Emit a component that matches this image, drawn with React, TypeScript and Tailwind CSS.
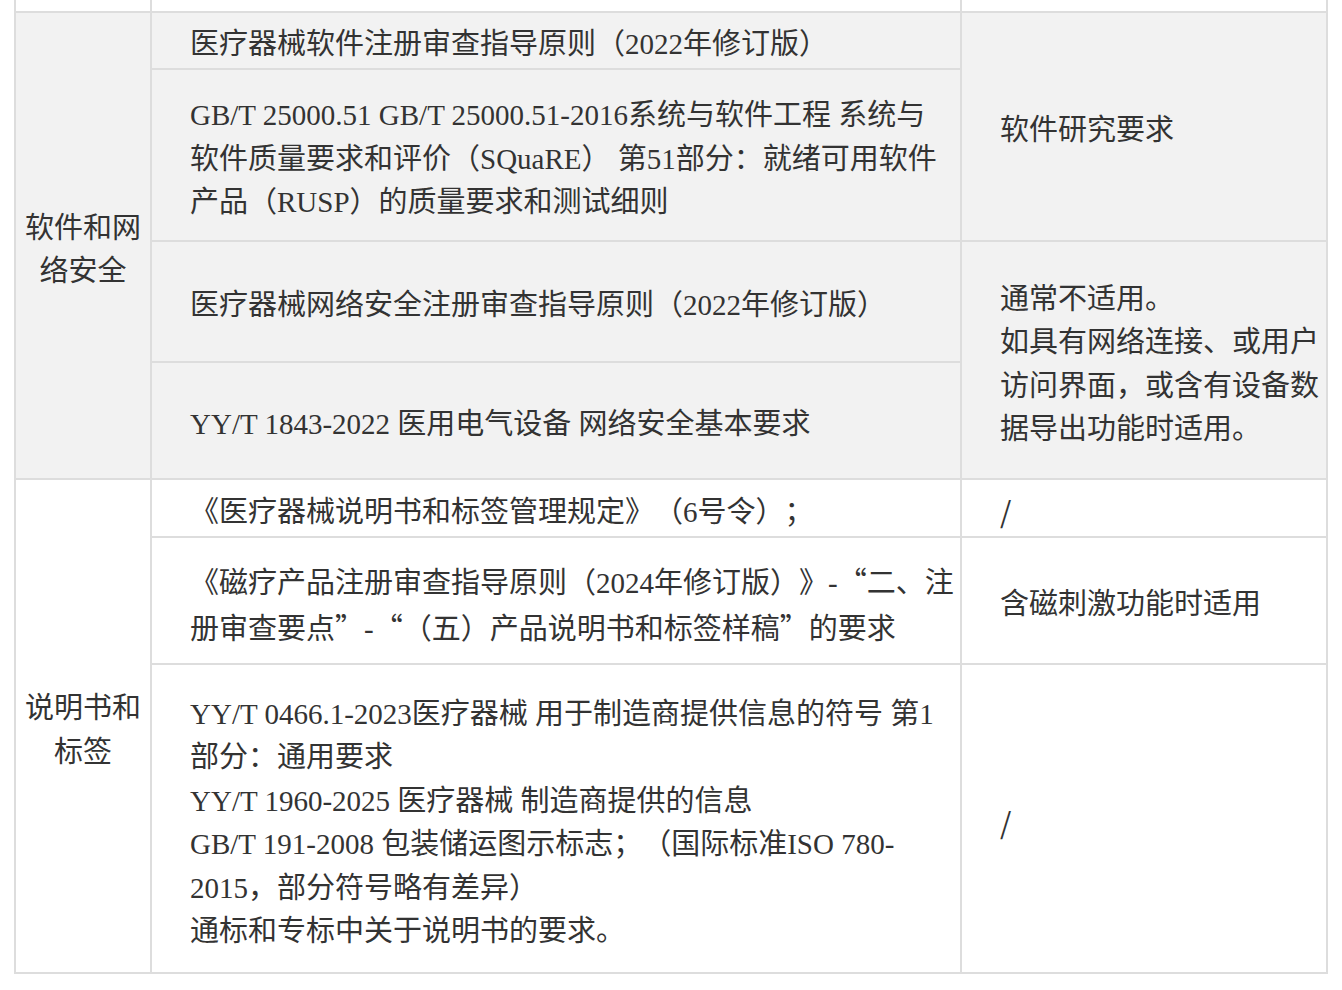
const FONT = "font-['Liberation_Serif','Noto_Sans_CJK_SC',sans-serif]";

function Q({ children }: { children: string }) {
  // full-width CJK quotes
  return <span className="font-['Noto_Sans_CJK_SC',sans-serif]">{children}</span>;
}

function Cell({
  className = "",
  gray = false,
  center = false,
  children,
}: {
  className?: string;
  gray?: boolean;
  center?: boolean;
  children?: React.ReactNode;
}) {
  return (
    <div
      className={`flex items-center pt-[9px] ${gray ? "bg-[#f2f2f2]" : "bg-white"} ${
        center ? "justify-center text-center" : "pl-[38px]"
      } ${className}`}
    >
      <div className="whitespace-nowrap">{children}</div>
    </div>
  );
}

function Slash() {
  return <span className="font-['Noto_Sans_CJK_SC',sans-serif]">/</span>;
}

export default function App() {
  return (
    <div
      lang="zh-CN"
      className={`min-h-screen bg-white ${FONT} text-[29px] leading-[43.5px] text-[#333] [text-spacing-trim:space-all]`}
    >
      <div className="ml-[14px] w-[1314px] bg-[#dddddd] px-[2px] pb-[2px]">
        <div className="grid grid-cols-[134px_808px_364px] grid-rows-[11px_55px_170px_119px_115px_56px_125px_307px] gap-[2px]">
          {/* top row, cut off */}
          <div className="bg-white" />
          <div className="bg-white" />
          <div className="bg-white" />

          {/* 软件和网络安全 */}
          <Cell gray center className="col-start-1 row-start-2 row-span-4">
            软件和网
            <br />
            络安全
          </Cell>
          <Cell gray className="col-start-2 row-start-2">
            医疗器械软件注册审查指导原则（2022年修订版）
          </Cell>
          <Cell gray className="col-start-3 row-start-2 row-span-2">
            软件研究要求
          </Cell>
          <Cell gray className="col-start-2 row-start-3">
            GB/T 25000.51 GB/T 25000.51-2016系统与软件工程 系统与
            <br />
            软件质量要求和评价（SQuaRE） 第51部分：就绪可用软件
            <br />
            产品（RUSP）的质量要求和测试细则
          </Cell>
          <Cell gray className="col-start-2 row-start-4">
            医疗器械网络安全注册审查指导原则（2022年修订版）
          </Cell>
          <Cell gray className="col-start-3 row-start-4 row-span-2">
            通常不适用。
            <br />
            如具有网络连接、或用户
            <br />
            访问界面，或含有设备数
            <br />
            据导出功能时适用。
          </Cell>
          <Cell gray className="col-start-2 row-start-5">
            YY/T 1843-2022 医用电气设备 网络安全基本要求
          </Cell>

          {/* 说明书和标签 */}
          <Cell center className="col-start-1 row-start-6 row-span-3">
            说明书和
            <br />
            标签
          </Cell>
          <Cell className="col-start-2 row-start-6">
            《医疗器械说明书和标签管理规定》（6号令）；
          </Cell>
          <Cell className="col-start-3 row-start-6">
            <Slash />
          </Cell>
          <Cell className="col-start-2 row-start-7">
            《磁疗产品注册审查指导原则（2024年修订版）》-<Q>“</Q>二、注
            <br />
            册审查要点<Q>”</Q>-<Q>“</Q>（五）产品说明书和标签样稿<Q>”</Q>的要求
          </Cell>
          <Cell className="col-start-3 row-start-7">含磁刺激功能时适用</Cell>
          <Cell className="col-start-2 row-start-8">
            YY/T 0466.1-2023医疗器械 用于制造商提供信息的符号 第1
            <br />
            部分：通用要求
            <br />
            YY/T 1960-2025 医疗器械 制造商提供的信息
            <br />
            GB/T 191-2008 包装储运图示标志；（国际标准ISO 780-
            <br />
            2015，部分符号略有差异）
            <br />
            通标和专标中关于说明书的要求。
          </Cell>
          <Cell className="col-start-3 row-start-8">
            <Slash />
          </Cell>
        </div>
      </div>
    </div>
  );
}
